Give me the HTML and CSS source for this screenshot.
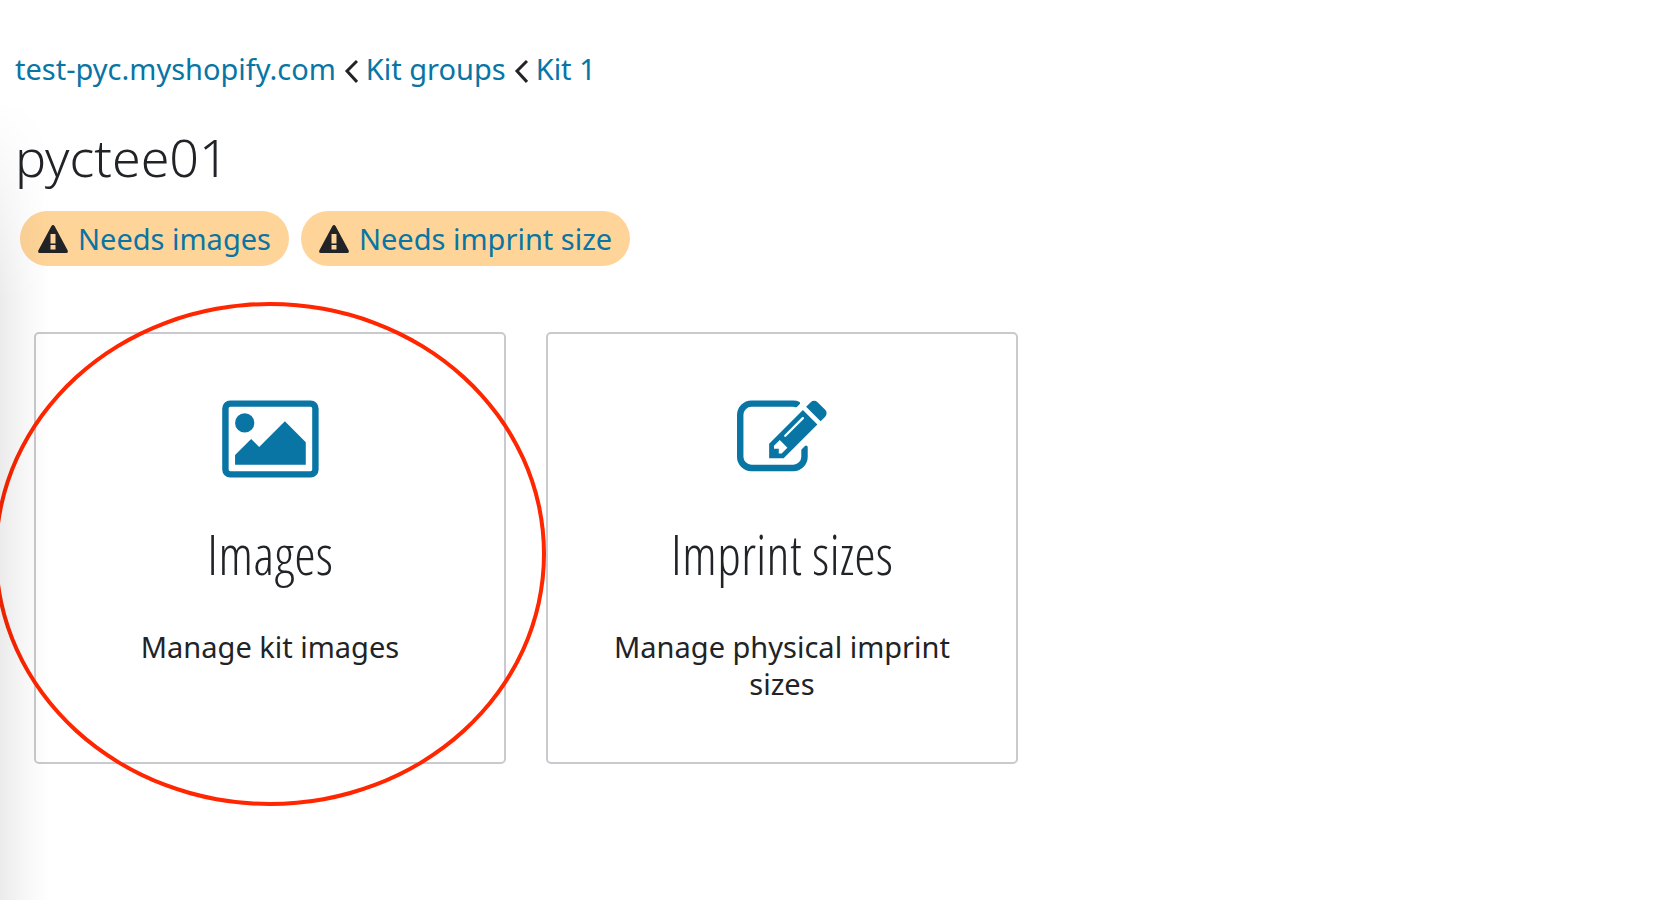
FILE: index.html
```html
<!DOCTYPE html>
<html lang="en">
<head>
    <meta charset="UTF-8">
    <meta name="viewport" content="width=device-width, initial-scale=1.0">
    <title>pyctee01</title>
    <link rel="stylesheet" href="styles.css">
</head>
<body>
    <main class="page">
        <nav class="breadcrumb" aria-label="Breadcrumb">
            <a href="#">test-pyc.myshopify.com</a>
            <svg class="chevron" viewBox="0 0 14 28" aria-hidden="true"><path d="M13 6L3 16l10 11"/></svg>
            <a href="#">Kit groups</a>
            <svg class="chevron" viewBox="0 0 14 28" aria-hidden="true"><path d="M13 6L3 16l10 11"/></svg>
            <a href="#">Kit 1</a>
        </nav>

        <h1 class="title">pyctee01</h1>

        <div class="badges">
            <a class="badge" href="#images">
                <svg class="warning" viewBox="0 0 30 28" aria-hidden="true"><path fill-rule="evenodd" d="M13.3 1.2q1.7-2.2 3.4 0l13 24.2q.7 2.6-1.5 2.6H1.8q-2.2 0-1.5-2.6zM12.5 9v9.5h5V9zm0 11v4.5h5V20z"/></svg>
                <span>Needs images</span>
            </a>
            <a class="badge" href="#imprint">
                <svg class="warning" viewBox="0 0 30 28" aria-hidden="true"><path fill-rule="evenodd" d="M13.3 1.2q1.7-2.2 3.4 0l13 24.2q.7 2.6-1.5 2.6H1.8q-2.2 0-1.5-2.6zM12.5 9v9.5h5V9zm0 11v4.5h5V20z"/></svg>
                <span>Needs imprint size</span>
            </a>
        </div>

        <div class="cards">
            <section class="card" id="images">
                <svg class="card-icon" viewBox="0 0 2048 1792" aria-hidden="true"><path d="M704 576q0 80-56 136t-136 56-136-56-56-136 56-136 136-56 136 56 56 136zm1024 384v448h-1408v-192l320-320 160 160 512-512zm96-704h-1600q-13 0-22.5 9.5t-9.5 22.5v1216q0 13 9.5 22.5t22.5 9.5h1600q13 0 22.5-9.5t9.5-22.5v-1216q0-13-9.5-22.5t-22.5-9.5zm160 32v1216q0 66-47 113t-113 47h-1600q-66 0-113-47t-47-113v-1216q0-66 47-113t113-47h1600q66 0 113 47t47 113z"/></svg>
                <h2>Images</h2>
                <p>Manage kit images</p>
                <div class="highlight"></div>
            </section>
            <section class="card" id="imprint">
                <svg class="card-icon" viewBox="0 0 1792 1792" aria-hidden="true"><path d="M888 1184l116-116-152-152-116 116v56h96v96h56zm440-720q-16-16-33 1l-350 350q-17 17-1 33t33-1l350-350q17-17 1-33zm80 594v190q0 119-84.5 203.5t-203.5 84.5h-832q-119 0-203.5-84.5t-84.5-203.5v-832q0-119 84.5-203.5t203.5-84.5h832q63 0 117 25 15 7 18 23 3 17-9 29l-49 49q-14 14-32 8-23-6-45-6h-832q-66 0-113 47t-47 113v832q0 66 47 113t113 47h832q66 0 113-47t47-113v-126q0-13 9-22l64-64q15-15 35-7t20 29zm-96-738l288 288-672 672h-288v-288zm444 132l-92 92-288-288 92-92q28-28 68-28t68 28l152 152q28 28 28 68t-28 68z"/></svg>
                <h2>Imprint sizes</h2>
                <p>Manage physical imprint sizes</p>
            </section>
        </div>
    </main>
    <div class="edge-shadow"></div>
</body>
</html>
```

FILE: styles.css
```css
* {
    margin: 0;
    padding: 0;
    box-sizing: border-box;
}

:root {
    --link: #0875a4;
    --text: #212326;
    --warning: #ffd498;
    --border: #cacace;
    --highlight: #ff2600;
}

body {
    background: #fff;
    color: var(--text);
    font-family: "Noto Sans", sans-serif;
    font-size: 29px;
    line-height: 37px;
    min-height: 100vh;
    overflow-x: hidden;
}

a {
    color: var(--link);
    text-decoration: none;
}

.page {
    padding: 50px 15px;
}

.breadcrumb {
    display: flex;
    align-items: center;
    gap: 8px;
}

.chevron {
    width: 14px;
    height: 28px;
    fill: none;
    stroke: var(--text);
    stroke-width: 3;
}

.title {
    margin-top: 34px;
    font-size: 52px;
    font-weight: 300;
    line-height: 72px;
}

.badges {
    display: flex;
    gap: 12px;
    margin: 18px 5px 0;
}

.badge {
    display: flex;
    align-items: center;
    gap: 10px;
    height: 55px;
    padding: 0 18px;
    border-radius: 28px;
    background: var(--warning);
}

.warning {
    width: 30px;
    height: 28px;
    fill: var(--text);
}

.cards {
    display: flex;
    gap: 40px;
    margin: 66px 19px 0;
}

.card {
    position: relative;
    display: flex;
    flex-direction: column;
    align-items: center;
    width: 472px;
    padding: 60px 50px;
    border: 2px solid var(--border);
    border-radius: 5px;
    text-align: center;
}

.card-icon {
    height: 90px;
    fill: var(--link);
}

.card h2 {
    margin: 40px 0 44px;
    font-family: "Open Sans Condensed Light", "Open Sans Condensed", sans-serif;
    font-size: 55px;
    font-weight: 300;
    line-height: 60px;
}

/* ring drawn over the card */
.highlight {
    position: absolute;
    inset: -32px -42px -44px -42px;
    border: 4px solid var(--highlight);
    border-radius: 50%;
    pointer-events: none;
}

.edge-shadow {
    position: fixed;
    top: 100px;
    bottom: 0;
    left: 0;
    width: 50px;
    background: linear-gradient(to right, rgba(0, 0, 0, 0.08), rgba(0, 0, 0, 0.03) 50%, transparent);
    -webkit-mask-image: linear-gradient(transparent, #000 200px);
    mask-image: linear-gradient(transparent, #000 200px);
    pointer-events: none;
}
```
